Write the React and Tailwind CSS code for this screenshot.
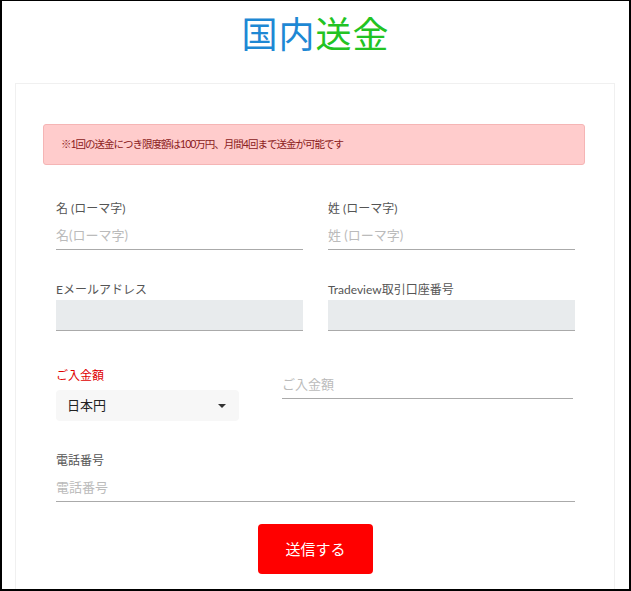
import React from 'react';

const font = { fontFamily: '"Lato", "Noto Sans CJK JP", sans-serif' };

const LineField = ({ label, placeholder, className = '' }) => (
  <div className={className}>
    <label className="block text-[12px] text-[#555] leading-[16px]">{label}</label>
    <input
      placeholder={placeholder}
      className="block w-full mt-[9px] pb-[5px] text-[13px] leading-[18px] bg-transparent border-b border-[#aaa] outline-none placeholder:text-[#bbb]"
    />
  </div>
);

const GreyField = ({ label, className = '' }) => (
  <div className={className}>
    <label className="block text-[12px] text-[#555] leading-[16px]">{label}</label>
    <div className="mt-[2px] h-[31px] bg-[#e8ebed] border-b border-[#aaa]" />
  </div>
);

export default function App() {
  return (
    <div className="w-[631px] h-[591px] overflow-hidden bg-white border-2 border-t border-black" style={font}>
      <h1 className="pt-[10px] text-center text-[36px] leading-[46px] tracking-[1px]">
        <span className="text-[#1e88d4]">国内</span>
        <span className="text-[#22c322]">送金</span>
      </h1>

      <div className="mt-[26px] ml-[13px] mr-[14px] h-[600px] border border-[#f0f0f0] pl-[27px] pr-[29px] pt-[40px]">
        <div className="h-[41px] flex items-center px-[17px] bg-[#ffcccc] border border-[#f5b5b5] rounded-[3px] text-[10.5px] text-[#8b2020] tracking-[-1px]">
          ※1回の送金につき限度額は100万円、月間4回まで送金が可能です
        </div>

        <div className="pl-[13px] pr-[10px]">
          <div className="mt-[36px] flex gap-[25px]">
            <LineField className="flex-1" label="名 (ローマ字)" placeholder="名(ローマ字)" />
            <LineField className="flex-1" label="姓 (ローマ字)" placeholder="姓 (ローマ字)" />
          </div>

          <div className="mt-[32px] flex gap-[25px]">
            <GreyField className="flex-1" label="Eメールアドレス" />
            <GreyField className="flex-1" label="Tradeview取引口座番号" />
          </div>

          <div className="mt-[37px] flex items-start">
            <div className="w-[183px]">
              <label className="block text-[12px] text-[#e00000] leading-[16px]">ご入金額</label>
              <div className="mt-[6px] h-[31px] flex items-center justify-between px-[11px] bg-[#f7f7f7] rounded-[4px] text-[13px] text-[#222]">
                <span>日本円</span>
                <svg width="8" height="4" viewBox="0 0 8 4" className="mr-[2px]">
                  <path d="M0 0h8L4 4z" fill="#333" />
                </svg>
              </div>
            </div>
            <input
              placeholder="ご入金額"
              className="ml-[43px] mt-[7px] w-[291px] pb-[5px] text-[13px] leading-[18px] bg-transparent border-b border-[#aaa] outline-none placeholder:text-[#bbb]"
            />
          </div>

          <LineField className="mt-[32px]" label="電話番号" placeholder="電話番号" />

          <div className="mt-[22px] flex justify-center">
            <button className="w-[115px] h-[50px] bg-[#ff0000] text-white text-[15px] rounded-[4px]">
              送信する
            </button>
          </div>
        </div>
      </div>
    </div>
  );
}
